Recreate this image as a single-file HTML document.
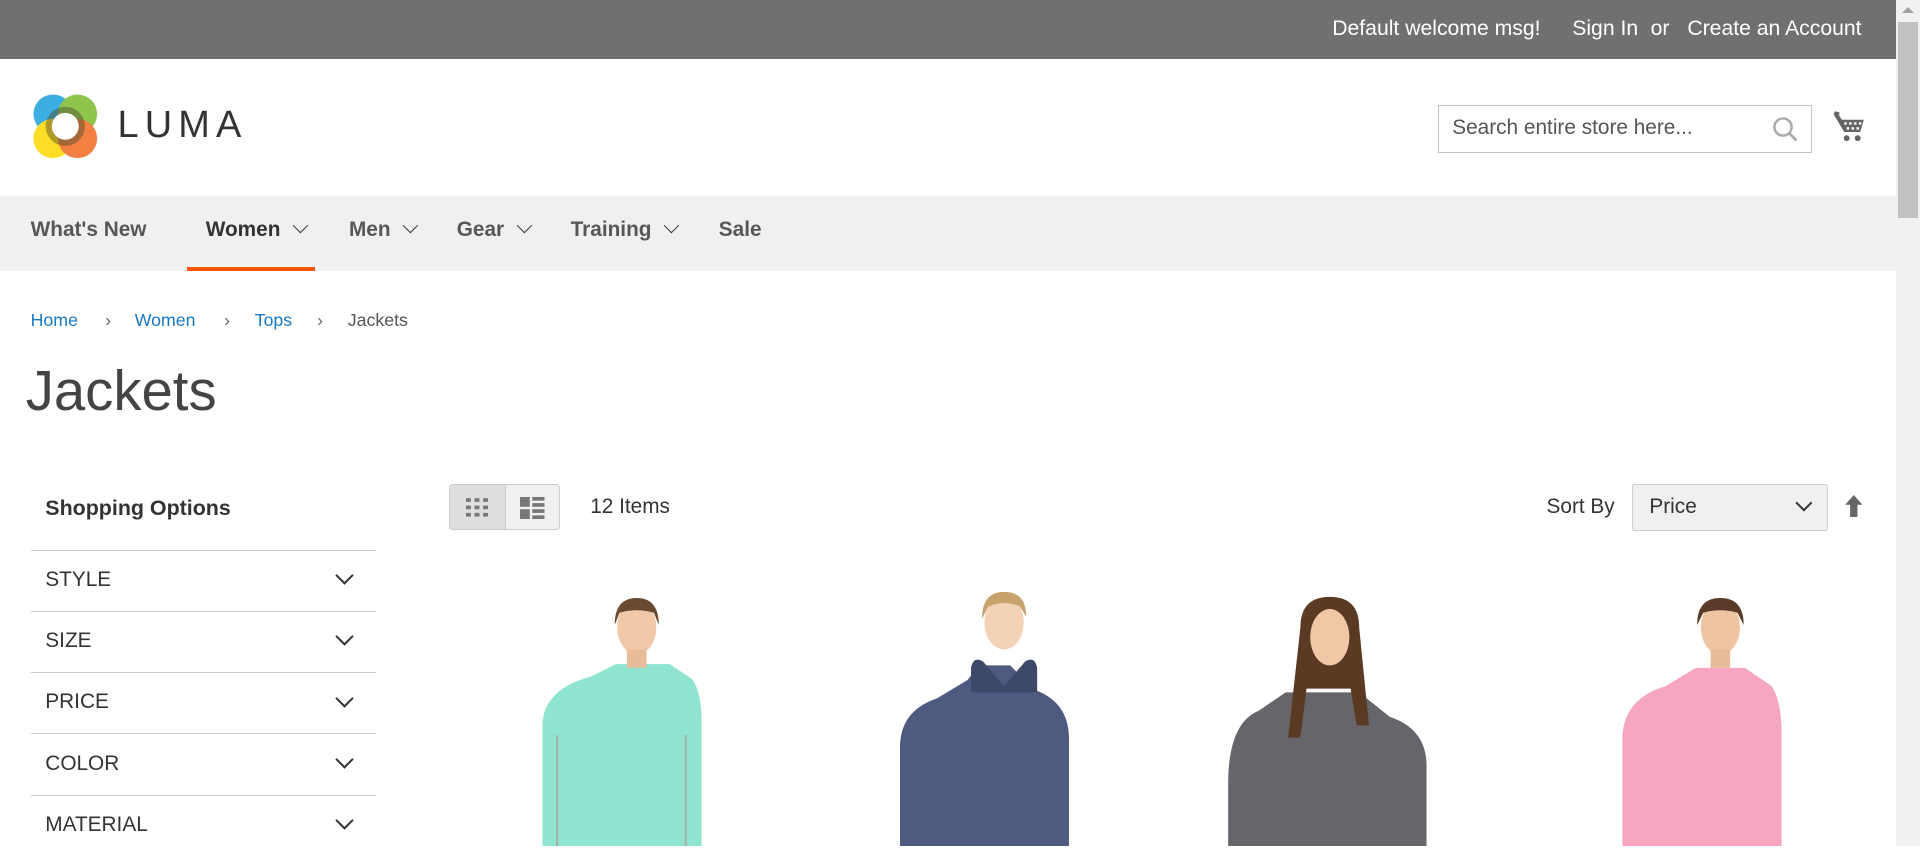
<!DOCTYPE html>
<html><head><meta charset="utf-8"><style>
html,body{margin:0;padding:0;}
body{zoom:1.22449;width:1568px;height:691px;overflow:hidden;position:relative;font-family:"Liberation Sans",sans-serif;color:#333;background:#fff;}
.a{position:absolute;white-space:nowrap;}
.top{left:0;top:0;width:1548px;height:48px;background:#6e716e;}
.nav{left:0;top:160px;width:1548px;height:61px;background:#f0f0f0;}
.chev{display:inline-block;width:8px;height:8px;border-right:1.6px solid #333;border-bottom:1.6px solid #333;transform:rotate(45deg);margin-left:12px;position:relative;top:-4px;}
.bc{top:253px;font-size:14.5px;color:#1979c3;}
.filt{left:25px;width:282px;height:49px;border-top:1px solid #ccc;}
.filt span{position:absolute;left:12px;top:14px;font-size:17px;color:#333;}
.filt i{position:absolute;right:20px;top:15px;width:9px;height:9px;border-right:1.8px solid #333;border-bottom:1.8px solid #333;transform:rotate(45deg);}
</style></head><body>
<div class="a top"></div>
<span class="a" style="color:#fff;font-size:17.3px;top:14px;left:1088px">Default welcome msg!</span>
<span class="a" style="color:#fff;font-size:17.3px;top:14px;left:1284px">Sign In</span>
<span class="a" style="color:#fff;font-size:17.3px;top:14px;left:1348px">or</span>
<span class="a" style="color:#fff;font-size:17.3px;top:14px;left:1378px">Create an Account</span>

<svg class="a" style="left:25px;top:75px" width="56" height="56" viewBox="0 0 56 56">
<g opacity="0.85"><circle cx="18" cy="18" r="16" fill="#1ca0dc"/><circle cx="38" cy="18" r="16" fill="#7cbb2e"/><circle cx="18" cy="38" r="16" fill="#ffd700"/><circle cx="38" cy="38" r="16" fill="#f26b21"/></g>
<circle cx="28" cy="28" r="16" fill="#4a4a2a" opacity="0.45"/>
<circle cx="28" cy="28" r="11" fill="#fff"/>
</svg>
<span class="a" style="left:96px;top:85px;font-size:31px;letter-spacing:5px;color:#333">LUMA</span>

<div class="a" style="left:1174px;top:86px;width:306px;height:39px;border:1px solid #c2c2c2;box-sizing:border-box"></div>
<span class="a" style="left:1186px;top:95px;font-size:17px;color:#555">Search entire store here...</span>
<svg class="a" style="left:1447px;top:95px" width="22" height="22" viewBox="0 0 22 22"><circle cx="9" cy="9" r="7" fill="none" stroke="#aaa" stroke-width="2"/><path d="M14 14l6 6" stroke="#aaa" stroke-width="2.2"/></svg>
<svg class="a" style="left:1496px;top:90px" width="28" height="28" viewBox="0 0 28 28"><path d="M1 3h4l3 5h18l-3 10H10z" fill="#666"/><path d="M2 2l4 1" stroke="#666" stroke-width="2"/><g fill="#fff"><rect x="10" y="10" width="2" height="2"/><rect x="14" y="10" width="2" height="2"/><rect x="18" y="10" width="2" height="2"/><rect x="22" y="10" width="2" height="2"/><rect x="12" y="14" width="2" height="2"/><rect x="16" y="14" width="2" height="2"/><rect x="20" y="14" width="2" height="2"/></g><circle cx="12" cy="23" r="2.4" fill="#666"/><circle cx="21" cy="23" r="2.4" fill="#666"/></svg>

<div class="a nav"></div>
<span class="a" style="left:25px;top:178px;font-size:17px;font-weight:bold;color:#575757">What's New</span>
<span class="a" style="left:168px;top:178px;font-size:17px;font-weight:bold;color:#333">Women<i class="chev"></i></span>
<span class="a" style="left:285px;top:178px;font-size:17px;font-weight:bold;color:#575757">Men<i class="chev"></i></span>
<span class="a" style="left:373px;top:178px;font-size:17px;font-weight:bold;color:#575757">Gear<i class="chev"></i></span>
<span class="a" style="left:466px;top:178px;font-size:17px;font-weight:bold;color:#575757">Training<i class="chev"></i></span>
<span class="a" style="left:587px;top:178px;font-size:17px;font-weight:bold;color:#575757">Sale</span>
<div class="a" style="left:153px;top:218px;width:104px;height:3px;background:#ff5501"></div>

<span class="a bc" style="left:25px">Home</span>
<span class="a bc" style="left:86px;color:#666">›</span>
<span class="a bc" style="left:110px">Women</span>
<span class="a bc" style="left:183px;color:#666">›</span>
<span class="a bc" style="left:208px">Tops</span>
<span class="a bc" style="left:259px;color:#666">›</span>
<span class="a bc" style="left:284px;color:#555">Jackets</span>

<span class="a" style="left:21px;top:292px;font-size:46px;font-weight:300;color:#444">Jackets</span>

<span class="a" style="left:37px;top:405px;font-size:17.5px;font-weight:bold;color:#333">Shopping Options</span>
<div class="a filt" style="top:449px"><span>STYLE</span><i></i></div>
<div class="a filt" style="top:499px"><span>SIZE</span><i></i></div>
<div class="a filt" style="top:549px"><span>PRICE</span><i></i></div>
<div class="a filt" style="top:599px"><span>COLOR</span><i></i></div>
<div class="a filt" style="top:649px"><span>MATERIAL</span><i></i></div>

<div class="a" style="left:367px;top:395px;width:90px;height:38px;border:1px solid #ccc;border-radius:3px;background:#f0f0f0;box-sizing:border-box;overflow:hidden">
<div style="position:absolute;left:0;top:0;width:45px;height:38px;background:#dedede;border-right:1px solid #ccc"></div>
<svg style="position:absolute;left:13px;top:10px" width="18" height="18" viewBox="0 0 18 18" fill="#777"><rect x="0" y="1" width="4" height="3"/><rect x="7" y="1" width="4" height="3"/><rect x="14" y="1" width="4" height="3"/><rect x="0" y="7" width="4" height="3"/><rect x="7" y="7" width="4" height="3"/><rect x="14" y="7" width="4" height="3"/><rect x="0" y="13" width="4" height="3"/><rect x="7" y="13" width="4" height="3"/><rect x="14" y="13" width="4" height="3"/></svg>
<svg style="position:absolute;left:57px;top:10px" width="20" height="18" viewBox="0 0 20 18" fill="#777"><rect x="0" y="0" width="8" height="8"/><rect x="10" y="0" width="10" height="3"/><rect x="10" y="5" width="10" height="3"/><rect x="0" y="10" width="8" height="8"/><rect x="10" y="10" width="10" height="3"/><rect x="10" y="15" width="10" height="3"/></svg>
</div>
<span class="a" style="left:482px;top:404px;font-size:17px;color:#333">12 Items</span>
<span class="a" style="left:1263px;top:404px;font-size:17px;color:#333">Sort By</span>
<div class="a" style="left:1333px;top:395px;width:160px;height:39px;border:1px solid #ccc;border-radius:2px;background:#f0f0f0;box-sizing:border-box"></div>
<span class="a" style="left:1347px;top:404px;font-size:17px;color:#333">Price</span>
<i class="a" style="left:1468px;top:406px;width:8px;height:8px;border-right:1.8px solid #333;border-bottom:1.8px solid #333;transform:rotate(45deg)"></i>
<svg class="a" style="left:1506px;top:404px" width="16" height="18" viewBox="0 0 16 18"><path d="M8 0L1 8h4v10h6V8h4z" fill="#666"/></svg>

<svg class="a" style="left:0;top:470px" width="1548" height="221" viewBox="0 470 1548 221">
<path d="M443 691V590q2-28 40-38l20-10h44l18 12q8 10 8 36v101z" fill="#8fe5cf"/>
<path d="M455 600v91M560 600v91" stroke="#aaa" stroke-width="1.5"/>
<ellipse cx="520" cy="512" rx="16" ry="22" fill="#f1c9a8"/>
<path d="M502 510q0-22 18-22t18 22l-4-10q-14-4-28 0z" fill="#6b4a32"/>
<rect x="512" y="530" width="16" height="15" fill="#e9bc99"/>
<path d="M735 691V610q0-30 30-40l25-15 10-12h25l20 20q28 10 28 40v88z" fill="#4e5a80"/>
<ellipse cx="820" cy="508" rx="16" ry="22" fill="#f3d2b6"/>
<path d="M802 505q0-22 18-22t18 20l-5-8q-12-6-26 0z" fill="#c7a26a"/>
<path d="M793 545q2-10 10-5l17 20 17-20q8-5 10 5v20h-54z" fill="#3e4868"/>
<path d="M1003 691V640q0-50 25-60l22-15h60l25 20q30 10 30 40v66z" fill="#66656c"/>
<path d="M1062 512q0-25 24-25t24 25l8 80h-10l-5-30h-36l-5 40h-10z" fill="#5b3a24"/>
<ellipse cx="1086" cy="520" rx="16" ry="23" fill="#f0c8a6"/>
<path d="M1325 691V600q2-30 35-40l25-15h40l22 15q8 12 8 40v91z" fill="#f6a6c3"/>
<ellipse cx="1405" cy="512" rx="16" ry="22" fill="#eec4a2"/>
<path d="M1386 510q0-22 19-22t19 22l-5-10q-14-4-28 0z" fill="#5a3a28"/>
<rect x="1397" y="530" width="16" height="15" fill="#e9bc99"/>
</svg>

<div class="a" style="left:1548px;top:0;width:20px;height:691px;background:#f1f1f1"></div>
<div class="a" style="left:1550px;top:18px;width:16px;height:160px;background:#c1c1c1"></div>
<div class="a" style="left:1553px;top:6px;width:0;height:0;border-left:5px solid transparent;border-right:5px solid transparent;border-bottom:5px solid #a3a3a3"></div>
</body></html>
